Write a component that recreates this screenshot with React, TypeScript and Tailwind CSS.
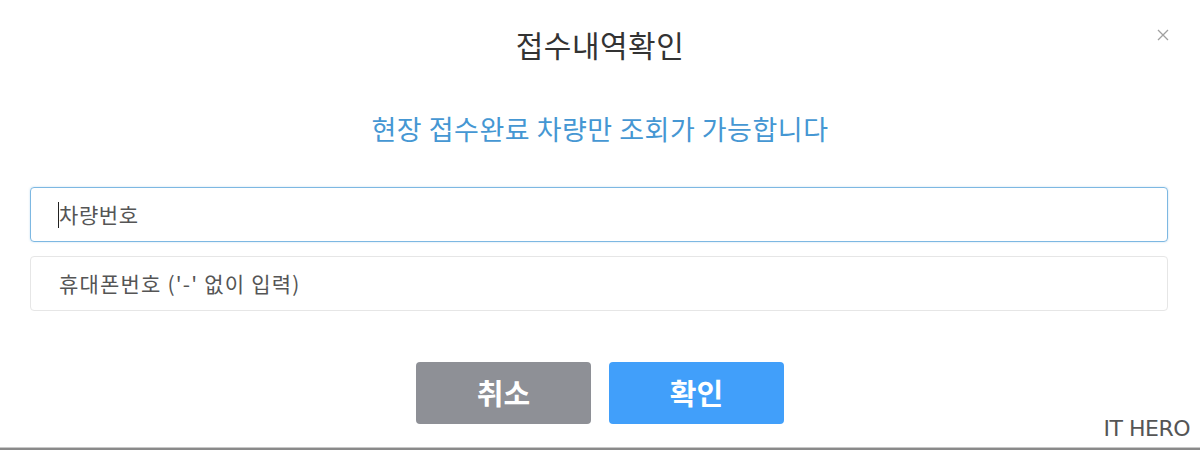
import React from 'react';

const App = () => {
  return (
    <div className="w-[1200px] h-[450px] bg-white flex flex-col overflow-hidden font-['Noto_Sans_CJK_KR','Noto_Sans',sans-serif]">
      <div className="flex-1 flex flex-col">
        {/* Header */}
        <div className="relative h-[90px] flex items-center justify-center">
          <h2 className="text-[30px] text-[#333] tracking-[0.5px] -mt-[2px]">접수내역확인</h2>
          <button className="absolute right-[30px] top-[28px] text-[#a0a0a0]">
            <svg width="14" height="14" viewBox="0 0 14 14" stroke="currentColor" strokeWidth="1.3">
              <path d="M2 2 L12 12 M12 2 L2 12" />
            </svg>
          </button>
        </div>

        {/* Notice */}
        <p className="text-center text-[27px] text-[#4597d3] h-[80px] leading-[80px] -mt-[1px] tracking-[0.5px]">
          현장 접수완료 차량만 조회가 가능합니다
        </p>

        {/* Inputs */}
        <div className="flex flex-col gap-[14px] px-[30px] pt-[18px] mr-[2px]">
          <div className="h-[55px] border border-[#7db8e2] rounded-[4px] flex items-center pl-[27px] shadow-[0_0_2px_rgba(125,184,226,0.5)]">
            <span className="w-px h-[26px] bg-[#222]" />
            <span className="text-[21px] text-[#555] tracking-[0.6px]">차량번호</span>
          </div>
          <div className="h-[55px] border border-[#e6e6e6] rounded-[4px] flex items-center pl-[28px]">
            <span className="text-[21px] text-[#555] tracking-[1.2px]">휴대폰번호 ('-' 없이 입력)</span>
          </div>
        </div>

        {/* Buttons */}
        <div className="flex justify-center gap-[18px] pt-[51px]">
          <button className="w-[175px] h-[62px] rounded-[4px] bg-[#8e9096] text-white text-[29px] font-bold">
            취소
          </button>
          <button className="w-[175px] h-[62px] rounded-[4px] bg-[#419ffa] text-white text-[29px] font-bold">
            확인
          </button>
        </div>
      </div>

      {/* Watermark + bottom rule */}
      <div className="relative h-[3px] bg-[#8a8a8a] border-t border-[#c8c8c8]">
        <span className="absolute right-[10px] bottom-[5px] text-[22px] text-[#555] font-['DejaVu_Sans',sans-serif] tracking-[-0.5px]">
          IT HERO
        </span>
      </div>
    </div>
  );
};

export default App;
